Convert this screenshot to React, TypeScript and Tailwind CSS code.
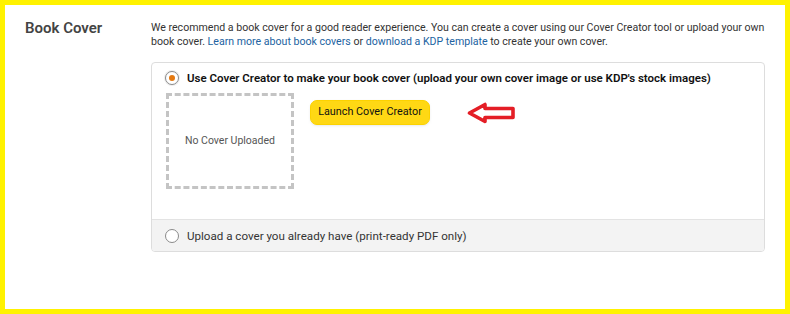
import { useState } from "react";

function Radio({ checked }: { checked: boolean }) {
  return (
    <span
      className={
        "flex h-[14px] w-[14px] shrink-0 items-center justify-center rounded-full border bg-white " +
        (checked ? "border-[#8a8a8a] shadow-[0_0_0_1px_#eee]" : "border-[#8a8a8a]")
      }
    >
      {checked && <span className="h-[6px] w-[6px] rounded-full bg-[#e47911]" />}
    </span>
  );
}

function RedArrow() {
  return (
    <svg width="50" height="22" viewBox="0 0 50 22" className="mt-[9px]">
      <path
        d="M2.5 11 L18 2.5 L18 6.5 L46 6.5 L46 15.5 L18 15.5 L18 19.5 Z"
        fill="#fff"
        stroke="#e41e26"
        strokeWidth="3.6"
        strokeLinejoin="round"
      />
    </svg>
  );
}

export default function App() {
  const [choice, setChoice] = useState<"creator" | "upload">("creator");

  return (
    <div className="h-[314px] w-[790px] border-[5px] border-[#fff200] bg-white font-['Roboto',sans-serif] text-[#333]">
      <div className="flex pt-[16px]">
        {/* Section title */}
        <div className="w-[146px] shrink-0 pl-[20px]">
          <h2 className="text-[15px] font-semibold leading-[14px] text-[#444]">Book Cover</h2>
        </div>

        {/* Section body */}
        <div className="w-[614px]">
          <p className="whitespace-nowrap text-[10.6px] leading-[14px] text-[#333]">
            We recommend a book cover for a good reader experience. You can create a cover using our Cover Creator tool or upload your own
            <br />
            book cover. <a className="text-[#2162a1]">Learn more about book covers</a> or{" "}
            <a className="text-[#2162a1]">download a KDP template</a> to create your own cover.
          </p>

          <div className="mt-[13px] overflow-hidden rounded-[4px] border border-[#dddddd]">
            <div className="px-[13px] pb-[30px] pt-[7px]" onClick={() => setChoice("creator")}>
              <label className="flex items-center gap-[8px]">
                <Radio checked={choice === "creator"} />
                <span className="whitespace-nowrap text-[11.5px] font-semibold leading-[16px] text-[#111]">
                  Use Cover Creator to make your book cover (upload your own cover image or use KDP's stock images)
                </span>
              </label>

              <div className="mt-[7px] flex items-start pl-[1px]">
                <div className="flex h-[96px] w-[128px] items-center justify-center border-[3px] border-dashed border-[#c4c4c4]">
                  <span className="text-[10.5px] text-[#555]">No Cover Uploaded</span>
                </div>
                <button className="ml-[16px] mt-[7px] h-[25px] w-[120px] rounded-[7px] border border-[#fcd200] bg-[#ffd814] text-[10.8px] text-[#0f1111] shadow-[0_1px_2px_rgba(213,217,217,0.5)]">
                  Launch Cover Creator
                </button>
                <div className="ml-[37px]">
                  <RedArrow />
                </div>
              </div>
            </div>

            <div
              className="flex h-[32px] items-center gap-[8px] border-t border-[#e3e3e3] bg-[#f3f3f3] px-[13px]"
              onClick={() => setChoice("upload")}
            >
              <Radio checked={choice === "upload"} />
              <span className="text-[11.6px] leading-[16px] text-[#333]">Upload a cover you already have (print-ready PDF only)</span>
            </div>
          </div>
        </div>
      </div>
    </div>
  );
}
